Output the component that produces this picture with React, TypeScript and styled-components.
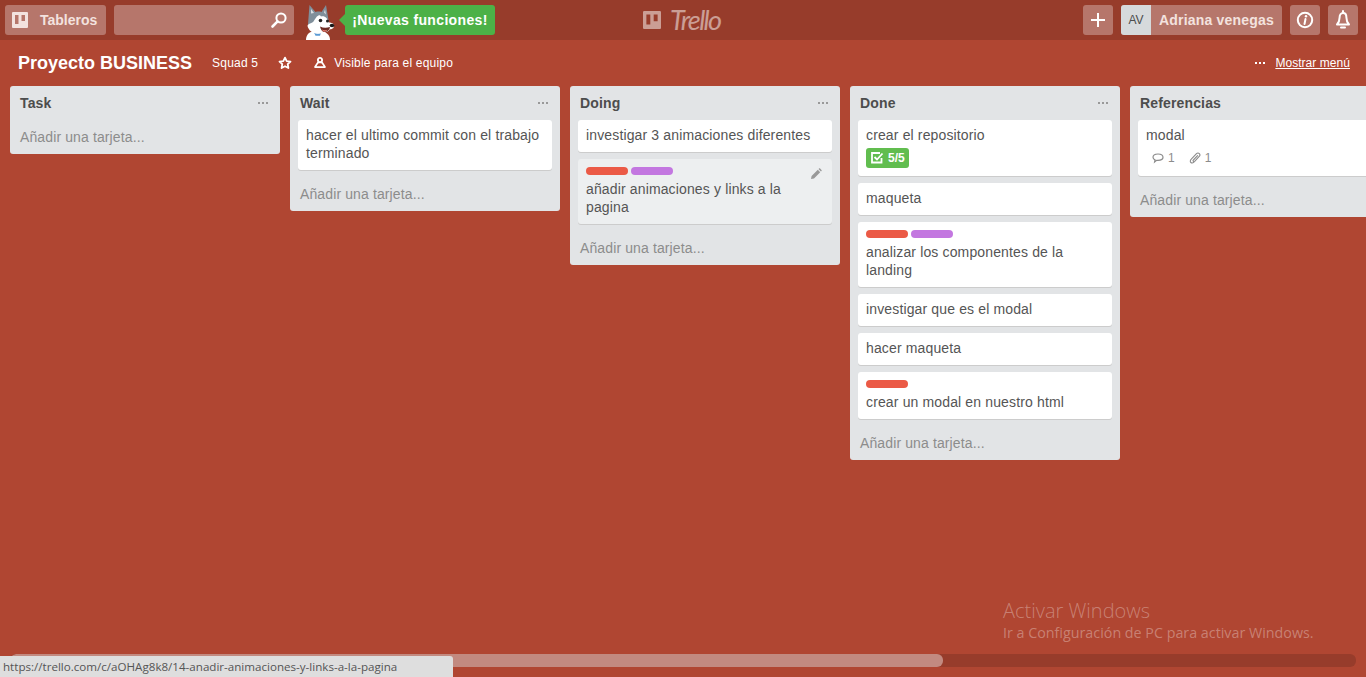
import React from 'react';
import styled, { createGlobalStyle } from 'styled-components';

const GlobalStyle = createGlobalStyle`
  html, body {
    margin: 0;
    height: 100%;
    overflow: hidden;
  }
  body {
    font-family: "Liberation Sans", Arial, sans-serif;
    font-size: 14px;
    color: #4d4d4d;
  }
  #root {
    height: 100%;
  }
`;

interface CardData {
  text: string;
  labels?: string[];
  checklist?: string;
  comments?: number;
  attachments?: number;
  hovered?: boolean;
}

interface ListData {
  title: string;
  cards: CardData[];
}

const RED = '#eb5a46';
const PURPLE = '#c377e0';

const lists: ListData[] = [
  { title: 'Task', cards: [] },
  {
    title: 'Wait',
    cards: [{ text: 'hacer el ultimo commit con el trabajo terminado' }],
  },
  {
    title: 'Doing',
    cards: [
      { text: 'investigar 3 animaciones diferentes' },
      { text: 'añadir animaciones y links a la pagina', labels: [RED, PURPLE], hovered: true },
    ],
  },
  {
    title: 'Done',
    cards: [
      { text: 'crear el repositorio', checklist: '5/5' },
      { text: 'maqueta' },
      { text: 'analizar los componentes de la landing', labels: [RED, PURPLE] },
      { text: 'investigar que es el modal' },
      { text: 'hacer maqueta' },
      { text: 'crear un modal en nuestro html', labels: [RED] },
    ],
  },
  {
    title: 'Referencias',
    cards: [{ text: 'modal', comments: 1, attachments: 1 }],
  },
];

const Page = styled.div`
  position: relative;
  height: 100%;
  display: flex;
  flex-direction: column;
  background: #b04632;
  overflow: hidden;
`;

const TopBar = styled.header`
  flex: none;
  height: 40px;
  padding: 5px 8px 0 5px;
  box-sizing: border-box;
  display: grid;
  grid-template-columns: 1fr auto 1fr;
  background: #973c2b;
`;

const BarGroup = styled.div<{ $end?: boolean }>`
  display: flex;
  align-items: flex-start;
  justify-content: ${(p) => (p.$end ? 'flex-end' : 'flex-start')};
  gap: 8px;
`;

const BarButton = styled.div`
  height: 30px;
  min-width: 30px;
  display: flex;
  align-items: center;
  justify-content: center;
  border-radius: 3px;
  background: rgba(255, 255, 255, 0.3);
  color: #fff;
  font-weight: 700;
  font-size: 14px;
  box-sizing: border-box;
`;

const BoardsButton = styled(BarButton)`
  width: 101px;
  justify-content: flex-start;
  padding-left: 7px;
  gap: 12px;
  color: #f3e2df;
`;

const SearchBox = styled(BarButton)`
  width: 180px;
  justify-content: flex-end;
  padding-right: 6px;
`;

const Mascot = styled.div`
  width: 32px;
  height: 35px;
  margin-left: 1px;
`;

const NewsButton = styled.div`
  position: relative;
  height: 30px;
  width: 150px;
  margin-left: 2px;
  display: flex;
  align-items: center;
  justify-content: center;
  border-radius: 3px;
  background: #4cb147;
  color: #fff;
  font-weight: 700;
  font-size: 14px;
  letter-spacing: 0.35px;
  white-space: nowrap;

  &::before {
    content: '';
    position: absolute;
    left: -6px;
    top: 9px;
    border-style: solid;
    border-width: 6px 6px 6px 0;
    border-color: transparent #4cb147 transparent transparent;
  }
`;

const Logo = styled.div`
  display: flex;
  align-items: center;
  gap: 9px;
  height: 30px;
  width: 78px;
  margin-left: 1px;
  opacity: 0.5;
  color: #fff;
`;

const LogoWord = styled.span`
  font-family: Lato, sans-serif;
  font-style: italic;
  font-size: 27px;
  line-height: 30px;
  letter-spacing: -1.6px;
  white-space: nowrap;
`;

const UserButton = styled(BarButton)`
  width: 161px;
  justify-content: flex-start;
  overflow: hidden;
  color: #f3e2df;
`;

const Avatar = styled.span`
  width: 30px;
  height: 30px;
  display: flex;
  align-items: center;
  justify-content: center;
  background: #d6dadc;
  color: #4d4d4d;
  font-size: 12px;
  font-weight: 400;
`;

const UserName = styled.span`
  margin-left: 8px;
  letter-spacing: 0.2px;
  white-space: nowrap;
`;

const BoardHeader = styled.div`
  flex: none;
  height: 46px;
  padding: 0 16px 0 18px;
  display: flex;
  align-items: center;
  color: #fff;
  font-size: 12px;
  letter-spacing: 0.2px;
`;

const BoardTitle = styled.h1`
  margin: 0;
  font-size: 18px;
  font-weight: 700;
  line-height: 22px;
  letter-spacing: 0;
`;

const TeamName = styled.span`
  margin-left: 20px;
`;

const StarSlot = styled.span`
  display: flex;
  margin-left: 20px;
`;

const VisibilitySlot = styled.span`
  display: flex;
  align-items: center;
  gap: 7px;
  margin-left: 21px;
`;

const MenuLink = styled.span`
  margin-left: auto;
  display: flex;
  align-items: center;
  gap: 10px;
  letter-spacing: 0.05px;
`;

const MenuLabel = styled.span`
  text-decoration: underline;
`;

const Board = styled.main`
  flex: 1;
  min-height: 0;
  padding-left: 10px;
  display: flex;
  align-items: flex-start;
  gap: 10px;
  overflow: hidden;
`;

const ListBox = styled.section`
  flex: none;
  width: 270px;
  box-sizing: border-box;
  border-radius: 3px;
  background: #e2e4e6;
`;

const ListHeader = styled.div`
  height: 34px;
  padding: 0 12px 0 10px;
  display: flex;
  align-items: center;
  justify-content: space-between;
`;

const ListTitle = styled.h2`
  margin: 0;
  font-size: 14px;
  font-weight: 700;
  color: #4d4d4d;
  letter-spacing: 0.15px;
`;

const CardStack = styled.div`
  padding: 0 8px;
  display: flex;
  flex-direction: column;
  gap: 7px;
  margin-bottom: 7px;
`;

const CardBox = styled.article<{ $hovered?: boolean }>`
  position: relative;
  padding: 6px 8px 8px;
  border-radius: 3px;
  background: ${(p) => (p.$hovered ? '#edeff0' : '#fff')};
  box-shadow: 0 1px 0 #ccc;
  line-height: 18px;
  letter-spacing: 0.14px;
  color: #555;
`;

const LabelRow = styled.div`
  display: flex;
  gap: 3px;
  margin: 2px 0 5px;
`;

const Label = styled.span<{ $color: string }>`
  width: 42px;
  height: 8px;
  border-radius: 4px;
  background: ${(p) => p.$color};
`;

const EditIcon = styled.span`
  position: absolute;
  top: 9px;
  right: 10px;
  display: flex;
  color: #999;
`;

const BadgeRow = styled.div`
  display: flex;
  align-items: center;
  margin-top: 4px;
  height: 20px;
`;

const CheckBadge = styled.span`
  display: flex;
  align-items: center;
  gap: 4px;
  height: 20px;
  padding: 0 4px;
  border-radius: 3px;
  background: #61bd4f;
  color: #fff;
  font-size: 12px;
  font-weight: 700;
  letter-spacing: 0;
`;

const MetaBadge = styled.span`
  display: flex;
  align-items: center;
  gap: 4px;
  margin: 0 8px 0 6px;
  font-size: 12px;
  color: #8c8c8c;
`;

const AddCard = styled.div`
  height: 34px;
  padding-left: 10px;
  display: flex;
  align-items: center;
  color: #8c8c8c;
  letter-spacing: 0.12px;
`;

const ScrollTrack = styled.div`
  flex: none;
  height: 13px;
  margin: 0 10px 10px;
  border-radius: 6px;
  background: #973c2b;
  overflow: hidden;
`;

const ScrollThumb = styled.div`
  width: 69.3%;
  height: 100%;
  border-radius: 6px;
  background: #c28a80;
`;

const Watermark = styled.div`
  position: absolute;
  left: 1003px;
  top: 598px;
  font-family: "Open Sans", sans-serif;
  color: rgba(255, 255, 255, 0.32);
  white-space: nowrap;
`;

const WatermarkTitle = styled.div`
  font-size: 20px;
  line-height: 25px;
  font-weight: 300;
`;

const WatermarkText = styled.div`
  font-size: 14.3px;
  line-height: 20px;
`;

const StatusBar = styled.div`
  position: absolute;
  left: 0;
  bottom: 0;
  width: 453px;
  height: 21px;
  padding-left: 3px;
  box-sizing: border-box;
  display: flex;
  align-items: center;
  border-top-right-radius: 3px;
  background: #dedede;
  color: #555;
  font-family: "Open Sans", sans-serif;
  font-size: 11.6px;
  white-space: nowrap;
`;

const BoardIcon = ({ size = 16 }: { size?: number }) => (
  <svg width={size} height={size} viewBox="0 0 16 16" fill="currentColor">
    <path
      fillRule="evenodd"
      d="M1 0h14a1 1 0 0 1 1 1v14a1 1 0 0 1-1 1H1a1 1 0 0 1-1-1V1a1 1 0 0 1 1-1Zm2 3v9h3.500V3H3Zm6.500 0v6H13V3H9.500Z"
    />
  </svg>
);

const SearchIcon = () => (
  <svg width="18" height="18" viewBox="0 0 18 18" fill="none" stroke="#fff">
    <circle cx="11" cy="7" r="4.6" strokeWidth="2" />
    <path d="M7.600 10.400 2.500 15.500" strokeWidth="2.600" strokeLinecap="round" />
  </svg>
);

const PlusIcon = () => (
  <svg width="16" height="16" viewBox="0 0 16 16" fill="none" stroke="#fff" strokeWidth="2">
    <path d="M8 1v14M1 8h14" />
  </svg>
);

const InfoIcon = () => (
  <svg width="18" height="18" viewBox="0 0 18 18" fill="none">
    <circle cx="9" cy="9" r="7.200" stroke="#fff" strokeWidth="2" />
    <path d="M9.500 8 8.500 13" stroke="#fff" strokeWidth="2" strokeLinecap="round" />
    <circle cx="10" cy="5.300" r="1.200" fill="#fff" />
  </svg>
);

const BellIcon = () => (
  <svg width="18" height="20" viewBox="0 0 18 20" fill="none" stroke="#fff" strokeWidth="2" strokeLinejoin="round">
    <path d="M9 3C6.800 3 5.600 4.800 5.600 7.400c0 3.400-.6 4.800-2.600 7.100h12c-2-2.300-2.600-3.700-2.600-7.100C12.400 4.800 11.200 3 9 3Z" />
    <path d="M9 1v2M7 17.500h4" strokeLinecap="round" />
  </svg>
);

const StarIcon = () => (
  <svg width="14" height="14" viewBox="0 0 14 14" fill="none" stroke="#fff" strokeWidth="1.800" strokeLinejoin="round">
    <path d="m7 1.600 1.700 3.500 3.800.5-2.800 2.600.7 3.800L7 10.200 3.600 12l.7-3.800L1.500 5.600l3.800-.5L7 1.600Z" />
  </svg>
);

const TeamIcon = () => (
  <svg width="14" height="14" viewBox="0 0 14 14" fill="#fff">
    <path
      fillRule="evenodd"
      d="M7 1c1.900 0 3 1.400 3 3 0 .6-.1 1.200-.4 1.700l3.100 4.900c.4.700 0 1.400-.8 1.400H2.100c-.8 0-1.200-.7-.8-1.400l3.100-4.900C4.100 5.200 4 4.600 4 4c0-1.600 1.100-3 3-3Zm0 1.800A1.200 1.200 0 1 0 7 5.200 1.200 1.200 0 0 0 7 2.800ZM6.600 7.200c-1 0-1.400.4-1.800 1l-1.300 2.100h7L9.200 8.200c-.4-.6-.8-1-1.800-1H6.600Z"
    />
  </svg>
);

const DotsIcon = ({ color = '#fff' }: { color?: string }) => (
  <svg width="10" height="4" viewBox="0 0 10 4" fill={color}>
    <rect x="0" y="1" width="2" height="2" />
    <rect x="4" y="1" width="2" height="2" />
    <rect x="8" y="1" width="2" height="2" />
  </svg>
);

const PencilIcon = () => (
  <svg width="12" height="12" viewBox="0 0 12 12" fill="currentColor">
    <path d="M1 11l.6-3L7.800 1.800l2.400 2.400L4 10.400 1 11ZM8.500 1.100l.6-.6c.3-.3.7-.3 1 0l1.400 1.400c.3.300.3.700 0 1l-.6.600-2.400-2.400Z" />
  </svg>
);

const CheckIcon = () => (
  <svg width="14" height="14" viewBox="0 0 14 14" fill="none" stroke="#fff">
    <path d="M11.500 7v4.500h-9.500v-9.500h8" strokeWidth="1.800" />
    <path d="m4.500 6 2.500 2.500 5.500-6" strokeWidth="1.800" />
  </svg>
);

const CommentIcon = () => (
  <svg width="12" height="12" viewBox="0 0 12 12" fill="none" stroke="#8c8c8c" strokeWidth="1.200">
    <path d="M6 2c2.800 0 5 1.300 5 3.200S8.800 8.400 6 8.400c-.5 0-1 0-1.400-.1L2.600 10 3 7.900C1.800 7.300 1 6.400 1 5.200 1 3.300 3.200 2 6 2Z" />
  </svg>
);

const ClipIcon = () => (
  <svg width="12" height="12" viewBox="0 0 12 12" fill="none" stroke="#8c8c8c" strokeWidth="1.100" strokeLinecap="round">
    <path d="M8.600 3.600 4.400 8c-.5.500-.5 1 0 1.400.4.400.9.400 1.300 0l4.500-5c.9-.9.900-2 .1-2.800s-1.900-.8-2.800.1L2.300 7.200c-1.300 1.300-1.200 2.600-.4 3.300.8.700 1.900.6 3-.4" />
  </svg>
);

const HuskyIcon = () => (
  <svg width="32" height="35" viewBox="0 0 32 35">
    <path d="M3 35c0-5 3-8 7-8.500h9c4 .5 8 3 8 8.500Z" fill="#fff" />
    <path d="M11 27.500c2 1.500 5 1.500 7 .3l-1 3h-4.500Z" fill="#5b9bd5" />
    <path d="M5 19 6.500 0l6 7c2-.6 4-.6 6 0l4.500-7 2.500 15c0 6-3 11-9.500 11C10 26 5.500 24 5 19Z" fill="#808f9b" />
    <path d="M8 8.500 8 4l3 4ZM21 7.500l1-3 1 5Z" fill="#d9dee2" />
    <path d="M4.500 21c.5-3 4-2 6-4.500 1.500-2 2.500-5 5-6 1-.4 2 .2 2.500 1 4-1 6.500 2 8 6 2.500 0 5 1 5 3.200 0 3-2.500 3.300-4.500 3.800C25 27 21 28.500 15 28.500 9 28.500 5.500 25 4.500 21Z" fill="#fff" />
    <circle cx="17.500" cy="15.500" r="1.800" fill="#222" />
    <circle cx="24.500" cy="16" r="1.500" fill="#222" />
    <ellipse cx="29" cy="20.500" rx="2.300" ry="1.700" fill="#1a1a1a" />
    <path d="M17 21.500c3 1.500 6.500 1.500 10 .5-.5 3.500-3 5-5.500 5-2 0-3.800-2-4.500-5.500Z" fill="#6d2b23" />
    <path d="M19 24.500c1.500 1 4 1 5.500.3-.8 1.300-2 2-3 2s-2-1-2.500-2.300Z" fill="#e2766a" />
  </svg>
);

const CardItem = ({ card }: { card: CardData }) => (
  <CardBox $hovered={card.hovered}>
    {card.labels && (
      <LabelRow>
        {card.labels.map((color) => (
          <Label key={color} $color={color} />
        ))}
      </LabelRow>
    )}
    {card.hovered && (
      <EditIcon>
        <PencilIcon />
      </EditIcon>
    )}
    {card.text}
    {(card.checklist || card.comments) && (
      <BadgeRow>
        {card.checklist && (
          <CheckBadge>
            <CheckIcon />
            {card.checklist}
          </CheckBadge>
        )}
        {card.comments && (
          <MetaBadge>
            <CommentIcon />
            {card.comments}
          </MetaBadge>
        )}
        {card.attachments && (
          <MetaBadge>
            <ClipIcon />
            {card.attachments}
          </MetaBadge>
        )}
      </BadgeRow>
    )}
  </CardBox>
);

const BoardList = ({ list }: { list: ListData }) => (
  <ListBox>
    <ListHeader>
      <ListTitle>{list.title}</ListTitle>
      <DotsIcon color="#999" />
    </ListHeader>
    {list.cards.length > 0 && (
      <CardStack>
        {list.cards.map((card) => (
          <CardItem key={card.text} card={card} />
        ))}
      </CardStack>
    )}
    <AddCard>Añadir una tarjeta...</AddCard>
  </ListBox>
);

export default function App() {
  return (
    <Page>
      <GlobalStyle />
      <TopBar>
        <BarGroup>
          <BoardsButton>
            <BoardIcon />
            Tableros
          </BoardsButton>
          <SearchBox>
            <SearchIcon />
          </SearchBox>
          <Mascot>
            <HuskyIcon />
          </Mascot>
          <NewsButton>¡Nuevas funciones!</NewsButton>
        </BarGroup>
        <Logo>
          <BoardIcon size={18} />
          <LogoWord>Trello</LogoWord>
        </Logo>
        <BarGroup $end>
          <BarButton>
            <PlusIcon />
          </BarButton>
          <UserButton>
            <Avatar>AV</Avatar>
            <UserName>Adriana venegas</UserName>
          </UserButton>
          <BarButton>
            <InfoIcon />
          </BarButton>
          <BarButton>
            <BellIcon />
          </BarButton>
        </BarGroup>
      </TopBar>
      <BoardHeader>
        <BoardTitle>Proyecto BUSINESS</BoardTitle>
        <TeamName>Squad 5</TeamName>
        <StarSlot>
          <StarIcon />
        </StarSlot>
        <VisibilitySlot>
          <TeamIcon />
          Visible para el equipo
        </VisibilitySlot>
        <MenuLink>
          <DotsIcon />
          <MenuLabel>Mostrar menú</MenuLabel>
        </MenuLink>
      </BoardHeader>
      <Board>
        {lists.map((list) => (
          <BoardList key={list.title} list={list} />
        ))}
      </Board>
      <ScrollTrack>
        <ScrollThumb />
      </ScrollTrack>
      <Watermark>
        <WatermarkTitle>Activar Windows</WatermarkTitle>
        <WatermarkText>Ir a Configuración de PC para activar Windows.</WatermarkText>
      </Watermark>
      <StatusBar>https://trello.com/c/aOHAg8k8/14-anadir-animaciones-y-links-a-la-pagina</StatusBar>
    </Page>
  );
}
